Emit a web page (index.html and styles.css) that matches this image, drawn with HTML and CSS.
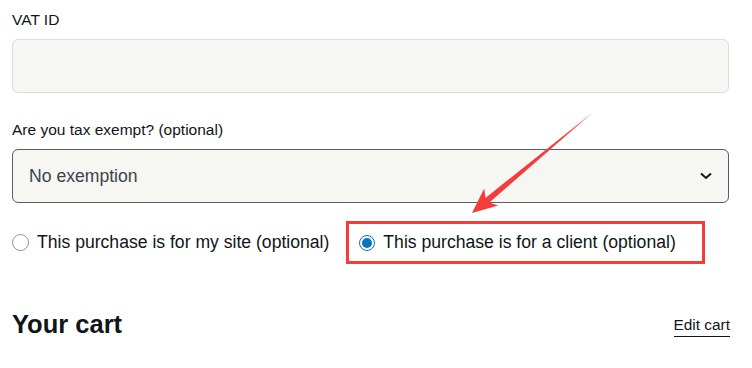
FILE: index.html
```html
<!DOCTYPE html>
<html>
<head>
<meta charset="utf-8">
<link rel="stylesheet" href="styles.css">
</head>
<body>
<div class="page">
  <div class="field">
    <label class="label">VAT ID</label>
    <div class="input"></div>
  </div>
  <div class="field field-tax">
    <label class="label">Are you tax exempt? (optional)</label>
    <div class="select">
      <span class="select-value">No exemption</span>
      <svg class="chevron" width="12" height="8" viewBox="0 0 12 8"><path d="M1 1.5 L6 6 L11 1.5" fill="none" stroke="#101517" stroke-width="2"/></svg>
    </div>
  </div>
  <div class="radios">
    <label class="radio-opt"><span class="radio"></span><span class="radio-text">This purchase is for my site (optional)</span></label>
    <label class="radio-opt highlight"><span class="radio checked"></span><span class="radio-text">This purchase is for a client (optional)</span></label>
  </div>
  <div class="cart-head">
    <h2 class="cart-title">Your cart</h2>
    <a class="edit-link">Edit cart</a>
  </div>
  <svg class="arrow" width="752" height="368" viewBox="0 0 752 368">
    <polygon points="592,113 485.5,197.9 484.2,188.5 472,213 498.2,205.5 489.3,202.5" fill="#f63b3b"/>
  </svg>
</div>
</body>
</html>
```
FILE: styles.css
```css
html, body {
  margin: 0;
  padding: 0;
  background: #fff;
}
.page {
  position: relative;
  padding: 10px 23px 0 12px;
  font-family: "Liberation Sans", Arial, sans-serif;
  color: #101517;
}
.field {
  display: flex;
  flex-direction: column;
}
.field-tax {
  margin-top: 27px;
}
.label {
  font-size: 15.5px;
  line-height: 20px;
  margin-bottom: 9px;
}
.input {
  height: 52px;
  border: 1px solid #dcdcde;
  border-radius: 6px;
  background: #f6f6f3;
}
.select {
  height: 52px;
  border: 1px solid #5a5d68;
  border-radius: 6px;
  background: #f6f6f3;
  display: flex;
  align-items: center;
  justify-content: space-between;
  padding: 0 16px 0 16px;
}
.select-value {
  font-size: 17.6px;
  color: #3c434a;
}
.chevron {
  display: block;
}
.radios {
  margin-top: 18px;
  display: flex;
  align-items: center;
  gap: 17px;
}
.radio-opt {
  display: flex;
  align-items: center;
  gap: 8px;
  font-size: 17.6px;
}
.highlight {
  border: 3px solid #f43c3c;
  height: 37px;
  padding: 0 26px 0 10px;
}
.radio {
  width: 15px;
  height: 15px;
  border: 1px solid #8c8f94;
  border-radius: 50%;
  box-sizing: content-box;
  flex: none;
  position: relative;
}
.radio.checked {
  border: 1.5px solid #0675c4;
  width: 14px;
  height: 14px;
}
.radio.checked::after {
  content: "";
  position: absolute;
  left: 2px;
  top: 2px;
  width: 10px;
  height: 10px;
  border-radius: 50%;
  background: #0675c4;
}
.cart-head {
  margin-top: 45px;
  display: flex;
  justify-content: space-between;
  align-items: center;
}
.cart-title {
  margin: 0;
  font-size: 25.5px;
  line-height: 30px;
  font-weight: 700;
}
.edit-link {
  font-size: 15.4px;
  line-height: 18px;
  padding-bottom: 2px;
  margin-top: 4px;
  border-bottom: 1px solid #101517;
  margin-right: -1px;
}
.arrow {
  position: absolute;
  left: 0;
  top: 0;
  pointer-events: none;
}
```
